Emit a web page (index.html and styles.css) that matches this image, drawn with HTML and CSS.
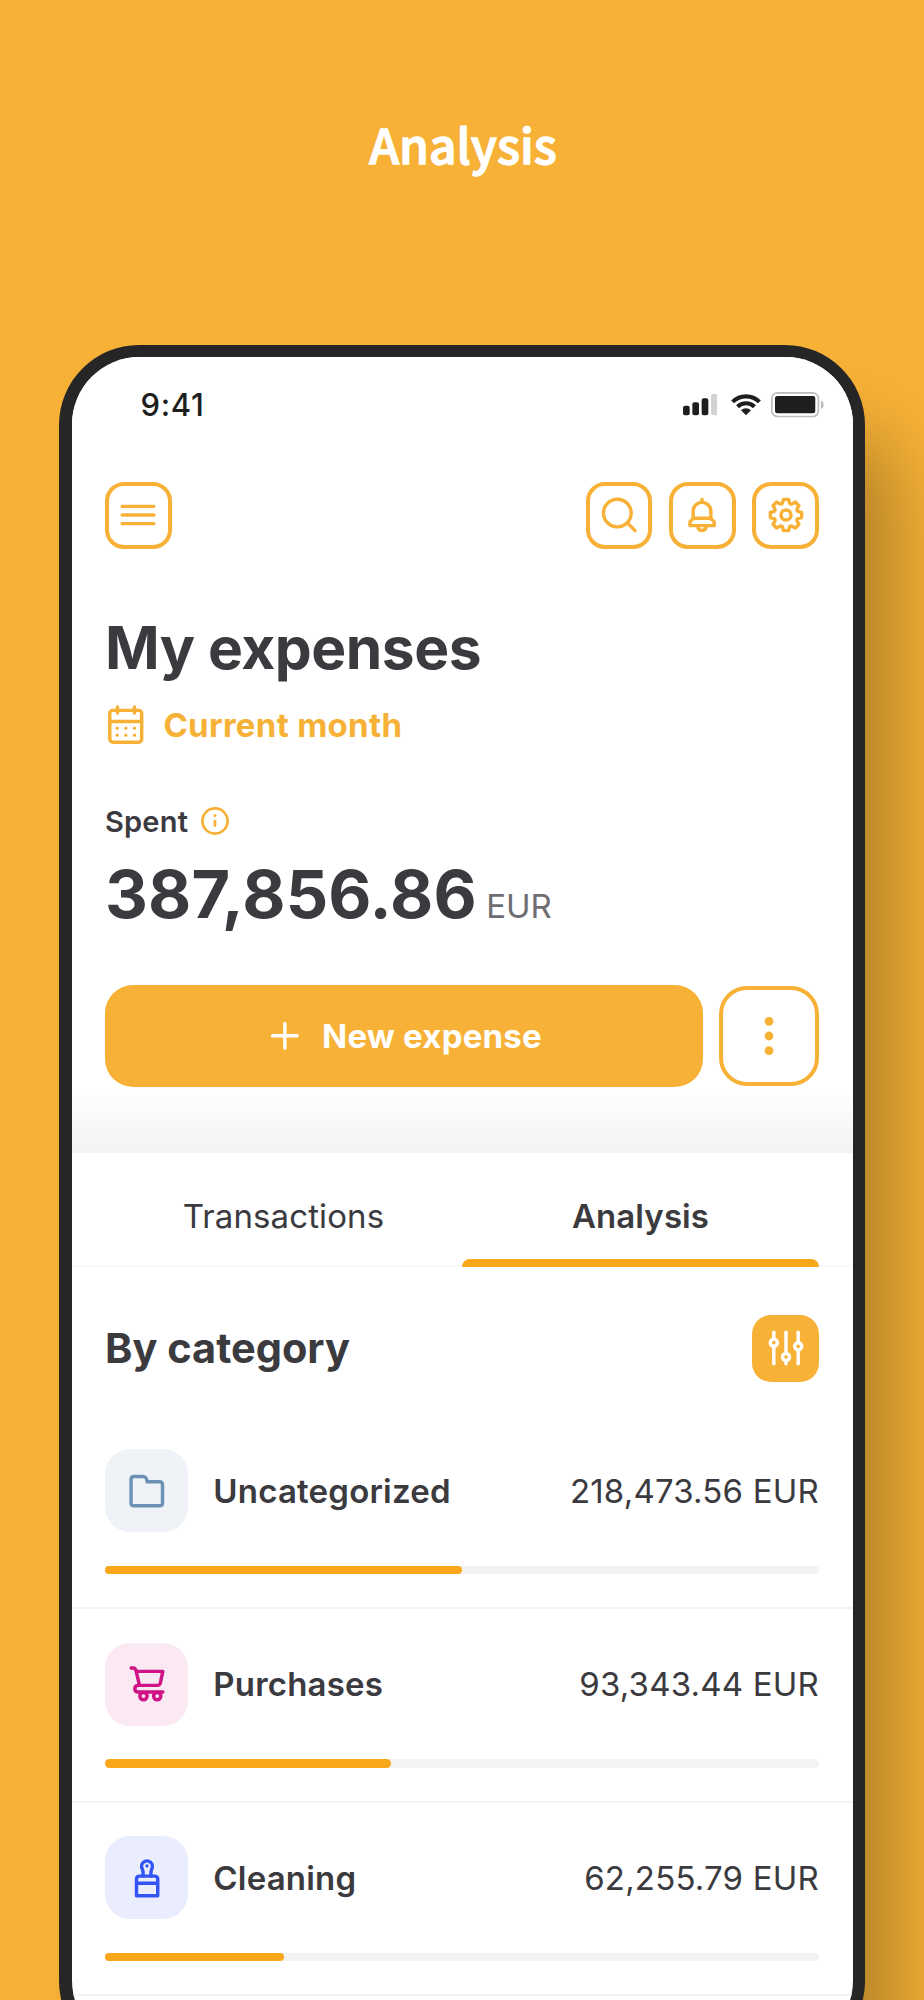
FILE: index.html
```
<!DOCTYPE html>
<html lang="en">
	<head>
		<meta charset="UTF-8" />
		<meta name="viewport" content="width=device-width, initial-scale=1.0" />
		<title>Analysis</title>

		<link rel="stylesheet" href="styles.css">
	</head>
	<body>
		<h2 class="page_title">Analysis</h2>

		<div class="phone">
			<main class="screen">
				<section class="summary">
					<div class="status">
						<span class="time">9:41</span>
						<div class="status_icons">
							<svg class="signal" viewBox="0 0 104 64">
								<rect x="0" y="35" width="20" height="29" rx="6" />
								<rect x="28" y="25" width="20" height="39" rx="6" />
								<rect x="56" y="13" width="20" height="51" rx="6" />
								<rect class="off" x="84" y="0" width="20" height="64" rx="6" />
							</svg>
							<svg class="wifi" viewBox="0 0 90 64">
								<path class="arc" d="M4.7 23.7A57 57 0 0 1 85.3 23.7M19.5 38.5A36 36 0 0 1 70.5 38.5" />
								<path d="M45 64L30 49A21 21 0 0 1 60 49z" />
							</svg>
							<svg class="battery" viewBox="0 0 158 76">
								<rect class="case" x="2.5" y="2.5" width="140" height="71" rx="17" />
								<rect x="12" y="12" width="121" height="52" rx="7" />
								<path class="cap" d="M150 26c5 1 8 4 8 12s-3 11-8 12z" />
							</svg>
						</div>
					</div>

					<nav class="toolbar">
						<button class="icon_btn">
							<svg class="icon" viewBox="0 0 24 24"><path d="M4.4 7.85h15.2M4.4 12h15.2M4.4 16.15h15.2" /></svg>
						</button>
						<div class="toolbar_right">
							<button class="icon_btn">
								<svg class="icon" viewBox="0 0 24 24">
									<circle cx="11.2" cy="11.05" r="6.65" />
									<path d="M16.1 15.9l3.6 3.6" />
								</svg>
							</button>
							<button class="icon_btn">
								<svg class="icon" viewBox="0 0 24 24">
									<path d="M12 4.5v1.4M7.75 13.6v-3.4a4.25 4.25 0 0 1 8.5 0v3.4" />
									<path d="M7.75 13.6h8.5c.4 1.1 1.6.7 1.6 1.9v1.6H6.25v-1.6c0-1.2 1.1-.8 1.5-1.9z" />
									<path d="M10 17.3c0 1.4.9 2.1 2 2.1s2-.7 2-2.1" />
								</svg>
							</button>
							<button class="icon_btn">
								<svg class="icon" viewBox="0 0 24 24">
									<path d="M10.8 4.5h2.4l.5 1.8q.4.7 1.3.3l1.5-.8 1.7 1.7-.8 1.5q-.4.9.3 1.3l1.8.5v2.4l-1.8.5q-.7.4-.3 1.3l.8 1.5-1.7 1.7-1.5-.8q-.9-.4-1.3.3l-.5 1.8h-2.4l-.5-1.8q-.4-.7-1.3-.3l-1.5.8-1.7-1.7.8-1.5q.4-.9-.3-1.3l-1.8-.5v-2.4l1.8-.5q.7-.4.3-1.3l-.8-1.5 1.7-1.7 1.5.8q.9.4 1.3-.3z" />
									<circle cx="12" cy="12" r="2.4" />
								</svg>
							</button>
						</div>
					</nav>

					<h1>My expenses</h1>
					<div class="period">
						<svg class="icon" viewBox="0 0 20 20">
							<rect x="2.3" y="3.05" width="15.3" height="15.3" rx="1.5" />
							<path d="M2.3 8.4h15.3M6 1.4v2.9M14.15 1.4v2.9" />
							<g class="dots">
								<circle cx="5.85" cy="11.6" r=".75" />
								<circle cx="10" cy="11.6" r=".75" />
								<circle cx="14.15" cy="11.6" r=".75" />
								<circle cx="5.85" cy="14.95" r=".75" />
								<circle cx="10" cy="14.95" r=".75" />
								<circle cx="14.15" cy="14.95" r=".75" />
							</g>
						</svg>
						<span>Current month</span>
					</div>

					<div class="spent">
						<span>Spent</span>
						<svg class="icon" viewBox="0 0 28 28">
							<circle cx="14" cy="14" r="12.6" />
							<path d="M14 14v4.6" />
							<circle class="dot" cx="14" cy="8.4" r="1.5" />
						</svg>
					</div>
					<p class="total"><strong>387,856.86</strong><span>EUR</span></p>

					<div class="actions">
						<button class="new_btn">
							<svg class="icon" viewBox="0 0 20 20"><path d="M10 4.1v11.8M4.1 10h11.8" /></svg>
							<span>New expense</span>
						</button>
						<button class="more_btn">
							<svg viewBox="0 0 10 40">
								<circle cx="5" cy="5.3" r="4.4" />
								<circle cx="5" cy="20" r="4.4" />
								<circle cx="5" cy="34.7" r="4.4" />
							</svg>
						</button>
					</div>
				</section>

				<ul class="tabs">
					<li class="tab">Transactions</li>
					<li class="tab active">Analysis</li>
				</ul>

				<section>
					<div class="list_head">
						<h3>By category</h3>
						<button class="filter_btn">
							<svg class="icon" viewBox="0 0 24 24">
								<path d="M6.15 4.4v15.2M12 4.4v15.2M17.85 4.4v15.2" />
								<circle cx="6.15" cy="9.45" r="1.7" />
								<circle cx="12" cy="16.3" r="1.7" />
								<circle cx="17.85" cy="11.2" r="1.7" />
							</svg>
						</button>
					</div>

					<ul>
						<li class="category">
							<div class="category_row">
								<div class="badge folder">
									<svg class="icon" viewBox="0 0 24 24">
										<path d="M4.35 6.4c0-.9.5-1.4 1.4-1.4h4.2c1.3 0 1.9.5 2.1 2.6h5.9c1 0 1.5.6 1.5 1.5v8.6c0 .9-.5 1.4-1.5 1.4H5.85c-1 0-1.5-.5-1.5-1.4z" />
									</svg>
								</div>
								<h4>Uncategorized</h4>
								<p>218,473.56 EUR</p>
							</div>
							<div class="bar"><div class="fill" style="width: 50%"></div></div>
						</li>
						<li class="category">
							<div class="category_row">
								<div class="badge cart">
									<svg class="icon" viewBox="0 0 24 24">
										<path d="M4.4 4.35h1c.9 0 1.2.6 1.4 1.6h12.8l-1.2 5.5c-.2.8-.6 1.2-1.4 1.2H8.4L6.8 5.95" />
										<path d="M8.6 12.65H7.9c-1.1 0-1.75.7-1.75 1.6s.65 1.6 1.75 1.6h11.7" />
										<circle cx="10.3" cy="17.8" r="1.75" />
										<circle cx="16.9" cy="17.8" r="1.75" />
									</svg>
								</div>
								<h4>Purchases</h4>
								<p>93,343.44 EUR</p>
							</div>
							<div class="bar"><div class="fill" style="width: 40%"></div></div>
						</li>
						<li class="category">
							<div class="category_row">
								<div class="badge brush">
									<svg class="icon" viewBox="0 0 24 24">
										<path d="M10.2 11c0-1.5 0-2.3-.4-3.2A2.6 2.6 0 1 1 14.2 7.8c-.4.9-.4 1.7-.4 3.2" />
										<path d="M6.95 20.5v-7.9c0-1 .5-1.5 1.5-1.5h7.2c1 0 1.5.5 1.5 1.5v7.9zM6.95 14.5h10.2" />
										<circle class="dot" cx="12" cy="6.2" r=".8" />
									</svg>
								</div>
								<h4>Cleaning</h4>
								<p>62,255.79 EUR</p>
							</div>
							<div class="bar"><div class="fill" style="width: 25%"></div></div>
						</li>
					</ul>
				</section>
			</main>
		</div>
	</body>
</html>
```
FILE: styles.css
```
* {
	padding: 0;
	margin: 0;
	border: 0;
	box-sizing: border-box;
}
li {
	list-style: none;
}
button {
	font-family: inherit;
	background: none;
}
svg {
	display: block;
	flex: none;
}

body {
	height: 2000px;
	overflow: hidden;
	background-color: #f6b136;
	color: #3b3a3f;
	font-family: Inter, 'Liberation Sans', sans-serif;
}

.page_title {
	height: 344.5px;
	padding: 108px 0 0 2px;
	line-height: 70px;
	text-align: center;
	color: #fff;
	font-family: 'Noto Sans CJK SC', 'Noto Sans', sans-serif;
	font-weight: 500;
	font-size: 48px;
	-webkit-text-stroke: 1.3px #fff;
}

.phone {
	width: 806px;
	height: 1716px;
	margin-left: 59px;
	padding: 12.5px;
	border-radius: 80px;
	background-color: #262626;
	box-shadow: 48px 72px 70px -13px rgba(0, 0, 0, 0.25);
}
.screen {
	height: 100%;
	border-radius: 67.5px;
	overflow: hidden;
	background-color: #fff;
}

/* icons */
.icon {
	width: 50px;
	height: 50px;
	fill: none;
	stroke: currentColor;
	stroke-width: 1.65;
	stroke-linecap: round;
	stroke-linejoin: round;
}
.dots,
.dot {
	fill: currentColor;
	stroke: none;
}

/* summary */
.summary {
	height: 795.5px;
	padding: 0 33.5px;
	background: linear-gradient(#fff 730px, #f3f3f3 795.5px);
}
.status {
	display: flex;
	justify-content: space-between;
	align-items: center;
	height: 94px;
	padding: 0 0 0 35.5px;
	color: #1e1e1e;
}
.time {
	font-weight: 500;
	font-size: 31px;
	letter-spacing: 0.7px;
}
.status_icons {
	display: flex;
	align-items: center;
	gap: 13.5px;
	margin-right: -5px;
	padding-top: 2px;
	fill: #1e1e1e;
}
.signal {
	width: 34.7px;
	height: 21.3px;
}
.signal .off {
	fill: #d2d2d2;
}
.wifi {
	width: 30px;
	height: 21.3px;
}
.wifi .arc {
	fill: none;
	stroke: #1e1e1e;
	stroke-width: 12.5;
}
.battery {
	width: 52.6px;
	height: 25.3px;
	margin-left: -3px;
}
.battery .case {
	fill: none;
	stroke: #bcbcbc;
	stroke-width: 5;
}
.battery .cap {
	fill: #bcbcbc;
}

.toolbar {
	display: flex;
	justify-content: space-between;
	margin-top: 31px;
}
.toolbar_right {
	display: flex;
	gap: 16.6px;
}
.icon_btn,
.more_btn,
.filter_btn {
	display: flex;
	justify-content: center;
	align-items: center;
	width: 66.7px;
	height: 66.7px;
	border-radius: 19px;
	color: #f6b136;
}
.icon_btn {
	border: 4px solid #f6b136;
}

h1 {
	margin-top: 64.3px;
	line-height: 70px;
	font-size: 58.7px;
	letter-spacing: -0.5px;
}
.period {
	display: flex;
	align-items: center;
	gap: 16.7px;
	height: 41.7px;
	margin-top: 21px;
	color: #f6b136;
	font-weight: 700;
	font-size: 33px;
	letter-spacing: 0.3px;
}
.period .icon,
.new_btn .icon {
	width: 41.7px;
	height: 41.7px;
}
.spent {
	display: flex;
	align-items: center;
	gap: 13px;
	height: 34px;
	margin-top: 58.7px;
	font-weight: 600;
	font-size: 29px;
	letter-spacing: 0.2px;
}
.spent .icon {
	width: 28px;
	height: 28px;
	color: #f6b136;
	stroke-width: 2.7;
}
.total {
	display: flex;
	align-items: baseline;
	gap: 9.5px;
	height: 80px;
	margin-top: 15.5px;
	line-height: 80px;
}
.total strong {
	font-size: 66.5px;
	letter-spacing: 0.1px;
}
.total span {
	color: #6e6e72;
	font-size: 33px;
}

.actions {
	display: flex;
	align-items: center;
	gap: 16.5px;
	height: 102px;
	margin-top: 51px;
}
.new_btn {
	display: flex;
	justify-content: center;
	align-items: center;
	gap: 16.7px;
	flex: 1;
	height: 102px;
	padding-right: 2px;
	border-radius: 28px;
	background-color: #f6b136;
	color: #fff;
	font-weight: 700;
	font-size: 33px;
	letter-spacing: 0.2px;
}
.more_btn {
	width: 100px;
	height: 100px;
	border: 4px solid #f6b136;
	border-radius: 28px;
}
.more_btn svg {
	width: 10px;
	height: 40px;
	fill: #f6b136;
}

/* tabs */
.tabs {
	display: flex;
	height: 114.5px;
	padding: 0 33.5px;
	border-bottom: 2px solid #f9f9f9;
}
.tab {
	display: flex;
	flex-direction: column;
	align-items: center;
	width: 50%;
	height: 114.5px;
	padding-top: 43px;
	line-height: 40px;
	font-size: 33px;
	letter-spacing: 0.1px;
}
.tab.active {
	font-weight: 600;
}
.tab.active::after {
	content: '';
	width: 100%;
	height: 8.5px;
	margin-top: 23px;
	border-radius: 8px 8px 0 0;
	background-color: #faa61a;
}

/* categories */
.list_head {
	display: flex;
	justify-content: space-between;
	align-items: center;
	padding: 48px 33.5px 34px;
}
.list_head h3 {
	font-size: 41.5px;
}
.filter_btn {
	background-color: #f6b136;
	color: #fff;
}
.filter_btn circle {
	fill: #f6b136;
}

.category {
	padding: 33.3px 33.5px;
	border-bottom: 2px solid #f3f3f3;
}
.category_row {
	display: flex;
	align-items: center;
	gap: 25px;
	margin-bottom: 33.3px;
}
.badge {
	display: flex;
	justify-content: center;
	align-items: center;
	width: 83.3px;
	height: 83.3px;
	border-radius: 25px;
}
.folder {
	background-color: #eff3f7;
	color: #6d91b4;
}
.cart {
	background-color: #fae8f3;
	color: #cf1286;
}
.brush {
	background-color: #e9edfe;
	color: #3454f5;
}
.category h4 {
	font-weight: 600;
	font-size: 33px;
	letter-spacing: 0.2px;
}
.category p {
	margin-left: auto;
	font-size: 33px;
	letter-spacing: 0.2px;
}
.bar {
	height: 8.4px;
	border-radius: 5px;
	background-color: #f3f3f3;
}
.fill {
	height: 100%;
	border-radius: 5px;
	background-color: #faa61a;
}
```
